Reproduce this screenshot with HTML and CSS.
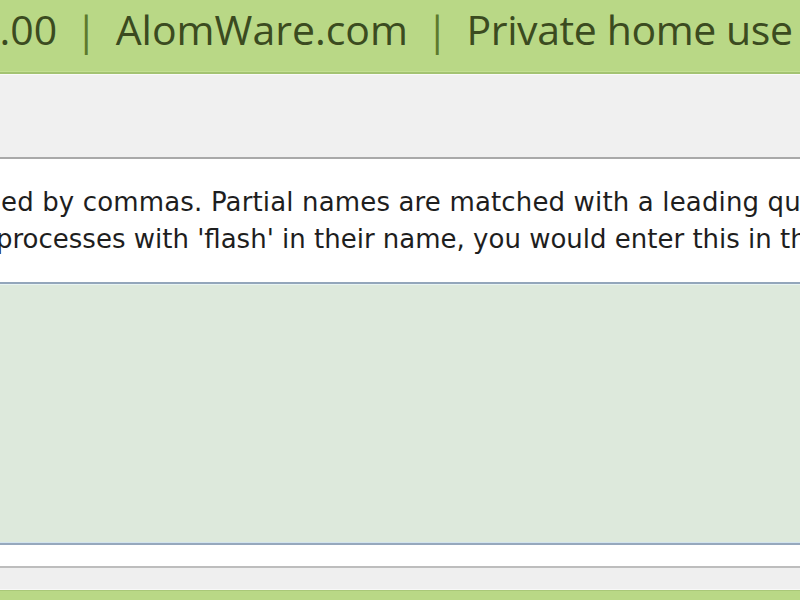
FILE: index.html
```html
<!DOCTYPE html>
<html lang="en">
<head>
    <meta charset="UTF-8">
    <meta name="viewport" content="width=device-width, initial-scale=1.0">
    <title>AlomWare Toolbox</title>
    <link rel="stylesheet" href="styles.css">
</head>
<body>
    <div class="window">
        <div class="title-bar">
            <span class="title-text">2.00</span>
            <span class="sep">|</span>
            <span class="title-text">AlomWare.com</span>
            <span class="sep">|</span>
            <span class="title-text last">Private home use</span>
        </div>

        <div class="toolbar"></div>

        <div class="help-box">
            <p class="help-line first">ed by commas. Partial names are matched with a leading question mark.</p>
            <p class="help-line second">processes with 'flash' in their name, you would enter this in the box below.</p>
        </div>

        <div class="entry-box"></div>

        <div class="edit-field"></div>

        <div class="status-bar"></div>

        <div class="footer-bar"></div>
    </div>
</body>
</html>
```

FILE: styles.css
```css
* {
    margin: 0;
    padding: 0;
    box-sizing: border-box;
}
html, body {
    width: 800px;
    height: 600px;
    overflow: hidden;
}
body {
    background: #f0f0f0;
}
.window {
    display: flex;
    flex-direction: column;
    width: 800px;
    height: 600px;
}
.title-bar {
    height: 74px;
    flex-shrink: 0;
    background: #b9d886;
    border-bottom: 2px solid #a3c372;
    box-shadow: inset 0 -1px 0 #c4e092;
    display: flex;
    align-items: flex-start;
    padding-top: 1px;
    margin-left: -24px;
    white-space: nowrap;
    font-family: "Open Sans", "Noto Sans", sans-serif;
    font-size: 41px;
    color: #3b4b20;
}
.sep {
    color: #5d7a2c;
    margin: 0 18px;
}
.title-text.last {
    letter-spacing: -0.4px;
}
.toolbar {
    height: 85px;
    flex-shrink: 0;
    background: #f0f0f0;
    border-top: 1px solid #fafafa;
    border-bottom: 2px solid #a9a9a9;
}
.help-box {
    height: 125px;
    flex-shrink: 0;
    background: #ffffff;
    border-bottom: 2px solid #93a6bb;
    padding-top: 25px;
    overflow: hidden;
    white-space: nowrap;
    font-family: "DejaVu Sans", Verdana, sans-serif;
    font-size: 26px;
    color: #1e1e1e;
}
.help-line {
    line-height: 37px;
}
.help-line.first {
    margin-left: 1px;
    letter-spacing: 0.15px;
}
.help-line.second {
    margin-left: -4px;
}
.entry-box {
    height: 259px;
    flex-shrink: 0;
    background: #dde9dc;
    border-top: 1px solid #e8f4f2;
    border-bottom: 1px solid #d2e4ee;
}
.edit-field {
    height: 25px;
    flex-shrink: 0;
    background: #ffffff;
    border-top: 2px solid #96a8bd;
    border-bottom: 2px solid #bdbdbd;
}
.status-bar {
    height: 22px;
    flex-shrink: 0;
    background: #efefef;
    border-bottom: 1px solid #f8f8f8;
}
.footer-bar {
    flex: 1;
    background: #b9d886;
    border-top: 1px solid #a9c878;
}
```
